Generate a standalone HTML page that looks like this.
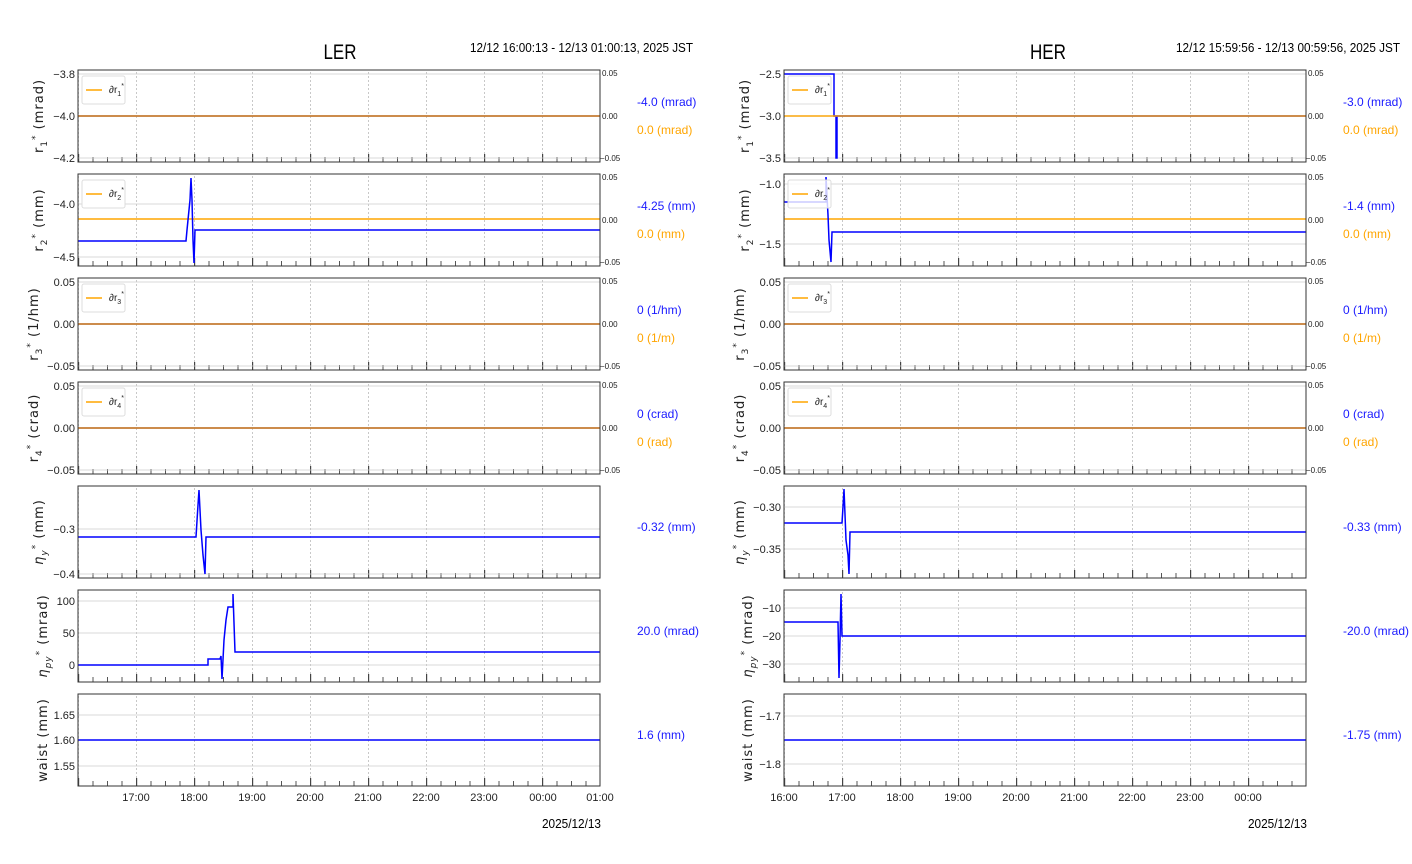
<!DOCTYPE html>
<html><head><meta charset="utf-8"><style>
body{margin:0;background:#fff}
svg{display:block;font-family:"Liberation Sans",sans-serif}
.t{font-size:11px;fill:#222}
.r{font-size:8px;fill:#222}
.yl{font-size:13px;fill:#222;font-family:"DejaVu Sans",sans-serif;letter-spacing:1px}
.b{font-size:12px;fill:#1a1aff}
.o{font-size:12px;fill:#ffa500}
.fr{fill:none;stroke:#333;stroke-width:1}
.g{stroke:#ccc;stroke-width:.8}
.bl{fill:none;stroke:#0000ff;stroke-width:1.5}
.or{stroke:#ffa500;stroke-width:1.5}
.orh{stroke:#ffa500;stroke-width:1.8;opacity:.8}
.lg{fill:#fff;stroke:#ddd;stroke-width:1}
</style></head><body>
<svg width="1412" height="864" viewBox="0 0 1412 864">
<defs>
<pattern id="gl" x="78" y="0" width="58" height="4" patternUnits="userSpaceOnUse"><rect x="58" y="0" width="0.8" height="2" fill="#bbb"/><rect x="0" y="0" width="0.8" height="2" fill="#bbb"/></pattern>
<pattern id="gr" x="784" y="0" width="58" height="4" patternUnits="userSpaceOnUse"><rect x="0" y="0" width="0.8" height="2" fill="#bbb"/></pattern>
<pattern id="tl" x="78" y="70" width="14.5" height="104" patternUnits="userSpaceOnUse"><rect x="0" y="87" width="1" height="5" fill="#555"/></pattern>
<pattern id="tr" x="784" y="70" width="14.5" height="104" patternUnits="userSpaceOnUse"><rect x="0" y="87" width="1" height="5" fill="#555"/></pattern>
<pattern id="ml" x="78" y="70" width="58" height="104" patternUnits="userSpaceOnUse"><rect x="0" y="84" width="1.2" height="8" fill="#444"/></pattern>
<pattern id="mr" x="784" y="70" width="58" height="104" patternUnits="userSpaceOnUse"><rect x="0" y="84" width="1.2" height="8" fill="#444"/></pattern>
</defs>

<text x="340" y="59" text-anchor="middle" style="font-size:21px" textLength="33" lengthAdjust="spacingAndGlyphs">LER</text>
<text x="470" y="52" style="font-size:13px" textLength="223" lengthAdjust="spacingAndGlyphs">12/12 16:00:13 - 12/13 01:00:13, 2025 JST</text>
<text x="1048" y="59" text-anchor="middle" style="font-size:21px" textLength="36" lengthAdjust="spacingAndGlyphs">HER</text>
<text x="1176" y="52" style="font-size:13px" textLength="224" lengthAdjust="spacingAndGlyphs">12/12 15:59:56 - 12/13 00:59:56, 2025 JST</text>

<g>
<rect x="78" y="70" width="522" height="92" fill="url(#gl)"/><rect x="78" y="174" width="522" height="92" fill="url(#gl)"/><rect x="78" y="278" width="522" height="92" fill="url(#gl)"/><rect x="78" y="382" width="522" height="92" fill="url(#gl)"/><rect x="78" y="486" width="522" height="92" fill="url(#gl)"/><rect x="78" y="590" width="522" height="92" fill="url(#gl)"/><rect x="78" y="694" width="522" height="92" fill="url(#gl)"/>
<rect x="784" y="70" width="522" height="92" fill="url(#gr)"/><rect x="784" y="174" width="522" height="92" fill="url(#gr)"/><rect x="784" y="278" width="522" height="92" fill="url(#gr)"/><rect x="784" y="382" width="522" height="92" fill="url(#gr)"/><rect x="784" y="486" width="522" height="92" fill="url(#gr)"/><rect x="784" y="590" width="522" height="92" fill="url(#gr)"/><rect x="784" y="694" width="522" height="92" fill="url(#gr)"/>
<rect x="78" y="70" width="522" height="728" fill="url(#tl)"/>
<rect x="784" y="70" width="522" height="728" fill="url(#tr)"/>
<rect x="78" y="70" width="522" height="728" fill="url(#ml)"/>
<rect x="784" y="70" width="522" height="728" fill="url(#mr)"/>
</g>

<g class="g">
<path d="M78 74H600M78 116H600M78 158H600M78 204H600M78 257H600M78 282H600M78 324H600M78 366H600M78 386H600M78 428H600M78 470H600M78 529H600M78 574H600M78 601H600M78 633H600M78 665H600M78 715H600M78 740H600M78 766H600"/>
<path d="M784 74H1306M784 116H1306M784 158H1306M784 184H1306M784 244H1306M784 282H1306M784 324H1306M784 366H1306M784 386H1306M784 428H1306M784 470H1306M784 507H1306M784 549H1306M784 608H1306M784 636H1306M784 664H1306M784 716H1306M784 764H1306"/>
</g>

<path class="bl" d="M78 116H600M78 324H600M78 428H600"/>
<path class="orh" d="M78 116H600M78 324H600M78 428H600"/>
<path class="or" d="M78 219H600"/>
<path class="bl" d="M78 241H186L187 230L188 220L190 200L191 178L192 200L193 240L194 263L195 230H600"/>
<path class="bl" d="M78 537H196L198 505L199 490L201 530L203 555L205 574L206 537H600"/>
<path class="bl" d="M78 665H208V659H220L221 656L222 679L224 640L226 620L228 607H233V594L235 652H600"/>
<path class="bl" d="M78 740H600"/>

<path class="bl" d="M784 74H834V116H836V158H837V116H1306M784 324H1306M784 428H1306"/>
<path class="orh" d="M784 116H1306M784 324H1306M784 428H1306"/>
<path class="or" d="M784 219H1306"/>
<path class="bl" d="M784 202H826L826 177L828 215L829 240L831 262L832 232H1306"/>
<path class="bl" d="M784 523H842L843 507L844 489L846 540L848 555L849 574L850 532H1306"/>
<path class="bl" d="M784 622H838L839 678L840 640L841 594L842 636H1306"/>
<path class="bl" d="M784 740H1306"/>

<g>
<rect class="lg" x="82" y="76" width="43" height="28" rx="2"/><path class="or" d="M86 90H102"/><text x="109" y="93" class="r" style="font-size:10px">∂r<tspan font-size="7" dy="3">1</tspan><tspan font-size="7" dy="-8">*</tspan></text>
<rect class="lg" x="82" y="180" width="43" height="28" rx="2"/><path class="or" d="M86 194H102"/><text x="109" y="197" class="r" style="font-size:10px">∂r<tspan font-size="7" dy="3">2</tspan><tspan font-size="7" dy="-8">*</tspan></text>
<rect class="lg" x="82" y="284" width="43" height="28" rx="2"/><path class="or" d="M86 298H102"/><text x="109" y="301" class="r" style="font-size:10px">∂r<tspan font-size="7" dy="3">3</tspan><tspan font-size="7" dy="-8">*</tspan></text>
<rect class="lg" x="82" y="388" width="43" height="28" rx="2"/><path class="or" d="M86 402H102"/><text x="109" y="405" class="r" style="font-size:10px">∂r<tspan font-size="7" dy="3">4</tspan><tspan font-size="7" dy="-8">*</tspan></text>
<rect class="lg" x="788" y="76" width="43" height="28" rx="2"/><path class="or" d="M792 90H808"/><text x="815" y="93" class="r" style="font-size:10px">∂r<tspan font-size="7" dy="3">1</tspan><tspan font-size="7" dy="-8">*</tspan></text>
<rect class="lg" x="788" y="180" width="43" height="28" rx="2" style="fill-opacity:.8"/><path class="or" d="M792 194H808"/><text x="815" y="197" class="r" style="font-size:10px">∂r<tspan font-size="7" dy="3">2</tspan><tspan font-size="7" dy="-8">*</tspan></text>
<rect class="lg" x="788" y="284" width="43" height="28" rx="2"/><path class="or" d="M792 298H808"/><text x="815" y="301" class="r" style="font-size:10px">∂r<tspan font-size="7" dy="3">3</tspan><tspan font-size="7" dy="-8">*</tspan></text>
<rect class="lg" x="788" y="388" width="43" height="28" rx="2"/><path class="or" d="M792 402H808"/><text x="815" y="405" class="r" style="font-size:10px">∂r<tspan font-size="7" dy="3">4</tspan><tspan font-size="7" dy="-8">*</tspan></text>
</g>

<g class="fr">
<rect x="78" y="70" width="522" height="92"/><rect x="78" y="174" width="522" height="92"/><rect x="78" y="278" width="522" height="92"/><rect x="78" y="382" width="522" height="92"/><rect x="78" y="486" width="522" height="92"/><rect x="78" y="590" width="522" height="92"/><rect x="78" y="694" width="522" height="92"/>
<rect x="784" y="70" width="522" height="92"/><rect x="784" y="174" width="522" height="92"/><rect x="784" y="278" width="522" height="92"/><rect x="784" y="382" width="522" height="92"/><rect x="784" y="486" width="522" height="92"/><rect x="784" y="590" width="522" height="92"/><rect x="784" y="694" width="522" height="92"/>
</g>

<g class="t" text-anchor="end">
<text x="75" y="78">−3.8</text><text x="75" y="120">−4.0</text><text x="75" y="162">−4.2</text>
<text x="75" y="208">−4.0</text><text x="75" y="261">−4.5</text>
<text x="75" y="286">0.05</text><text x="75" y="328">0.00</text><text x="75" y="370">−0.05</text>
<text x="75" y="390">0.05</text><text x="75" y="432">0.00</text><text x="75" y="474">−0.05</text>
<text x="75" y="533">−0.3</text><text x="75" y="578">−0.4</text>
<text x="75" y="605">100</text><text x="75" y="637">50</text><text x="75" y="669">0</text>
<text x="75" y="719">1.65</text><text x="75" y="744">1.60</text><text x="75" y="770">1.55</text>
<text x="781" y="78">−2.5</text><text x="781" y="120">−3.0</text><text x="781" y="162">−3.5</text>
<text x="781" y="188">−1.0</text><text x="781" y="248">−1.5</text>
<text x="781" y="286">0.05</text><text x="781" y="328">0.00</text><text x="781" y="370">−0.05</text>
<text x="781" y="390">0.05</text><text x="781" y="432">0.00</text><text x="781" y="474">−0.05</text>
<text x="781" y="511">−0.30</text><text x="781" y="553">−0.35</text>
<text x="781" y="612">−10</text><text x="781" y="640">−20</text><text x="781" y="668">−30</text>
<text x="781" y="720">−1.7</text><text x="781" y="768">−1.8</text>
</g>
<g class="r">
<text x="602" y="76">0.05</text><text x="602" y="119">0.00</text><text x="600" y="161">−0.05</text>
<text x="602" y="180">0.05</text><text x="602" y="223">0.00</text><text x="600" y="265">−0.05</text>
<text x="602" y="284">0.05</text><text x="602" y="327">0.00</text><text x="600" y="369">−0.05</text>
<text x="602" y="388">0.05</text><text x="602" y="431">0.00</text><text x="600" y="473">−0.05</text>
<text x="1308" y="76">0.05</text><text x="1308" y="119">0.00</text><text x="1306" y="161">−0.05</text>
<text x="1308" y="180">0.05</text><text x="1308" y="223">0.00</text><text x="1306" y="265">−0.05</text>
<text x="1308" y="284">0.05</text><text x="1308" y="327">0.00</text><text x="1306" y="369">−0.05</text>
<text x="1308" y="388">0.05</text><text x="1308" y="431">0.00</text><text x="1306" y="473">−0.05</text>
</g>

<g class="yl" text-anchor="middle">
<text transform="translate(43,116) rotate(-90)">r<tspan font-size="9" dy="4">1</tspan><tspan font-size="9" dy="-9">*</tspan><tspan dy="5"> (mrad)</tspan></text>
<text transform="translate(43,220) rotate(-90)">r<tspan font-size="9" dy="4">2</tspan><tspan font-size="9" dy="-9">*</tspan><tspan dy="5"> (mm)</tspan></text>
<text transform="translate(38,324) rotate(-90)">r<tspan font-size="9" dy="4">3</tspan><tspan font-size="9" dy="-9">*</tspan><tspan dy="5"> (1/hm)</tspan></text>
<text transform="translate(38,428) rotate(-90)">r<tspan font-size="9" dy="4">4</tspan><tspan font-size="9" dy="-9">*</tspan><tspan dy="5"> (crad)</tspan></text>
<text transform="translate(43,532) rotate(-90)"><tspan font-style="italic">η</tspan><tspan font-size="9" dy="4" font-style="italic">y</tspan><tspan font-size="9" dy="-9">*</tspan><tspan dy="5"> (mm)</tspan></text>
<text transform="translate(47,636) rotate(-90)"><tspan font-style="italic">η</tspan><tspan font-size="9" dy="4" font-style="italic">py</tspan><tspan font-size="9" dy="-9">*</tspan><tspan dy="5"> (mrad)</tspan></text>
<text transform="translate(47,740) rotate(-90)">waist (mm)</text>
<text transform="translate(749,116) rotate(-90)">r<tspan font-size="9" dy="4">1</tspan><tspan font-size="9" dy="-9">*</tspan><tspan dy="5"> (mrad)</tspan></text>
<text transform="translate(749,220) rotate(-90)">r<tspan font-size="9" dy="4">2</tspan><tspan font-size="9" dy="-9">*</tspan><tspan dy="5"> (mm)</tspan></text>
<text transform="translate(744,324) rotate(-90)">r<tspan font-size="9" dy="4">3</tspan><tspan font-size="9" dy="-9">*</tspan><tspan dy="5"> (1/hm)</tspan></text>
<text transform="translate(744,428) rotate(-90)">r<tspan font-size="9" dy="4">4</tspan><tspan font-size="9" dy="-9">*</tspan><tspan dy="5"> (crad)</tspan></text>
<text transform="translate(744,532) rotate(-90)"><tspan font-style="italic">η</tspan><tspan font-size="9" dy="4" font-style="italic">y</tspan><tspan font-size="9" dy="-9">*</tspan><tspan dy="5"> (mm)</tspan></text>
<text transform="translate(752,636) rotate(-90)"><tspan font-style="italic">η</tspan><tspan font-size="9" dy="4" font-style="italic">py</tspan><tspan font-size="9" dy="-9">*</tspan><tspan dy="5"> (mrad)</tspan></text>
<text transform="translate(752,740) rotate(-90)">waist (mm)</text>
</g>

<g>
<text class="b" x="637" y="106">-4.0 (mrad)</text><text class="o" x="637" y="134">0.0 (mrad)</text>
<text class="b" x="637" y="210">-4.25 (mm)</text><text class="o" x="637" y="238">0.0 (mm)</text>
<text class="b" x="637" y="314">0 (1/hm)</text><text class="o" x="637" y="342">0 (1/m)</text>
<text class="b" x="637" y="418">0 (crad)</text><text class="o" x="637" y="446">0 (rad)</text>
<text class="b" x="637" y="531">-0.32 (mm)</text>
<text class="b" x="637" y="635">20.0 (mrad)</text>
<text class="b" x="637" y="739">1.6 (mm)</text>
<text class="b" x="1343" y="106">-3.0 (mrad)</text><text class="o" x="1343" y="134">0.0 (mrad)</text>
<text class="b" x="1343" y="210">-1.4 (mm)</text><text class="o" x="1343" y="238">0.0 (mm)</text>
<text class="b" x="1343" y="314">0 (1/hm)</text><text class="o" x="1343" y="342">0 (1/m)</text>
<text class="b" x="1343" y="418">0 (crad)</text><text class="o" x="1343" y="446">0 (rad)</text>
<text class="b" x="1343" y="531">-0.33 (mm)</text>
<text class="b" x="1343" y="635">-20.0 (mrad)</text>
<text class="b" x="1343" y="739">-1.75 (mm)</text>
</g>

<g class="t" text-anchor="middle">
<text x="136" y="801">17:00</text><text x="194" y="801">18:00</text><text x="252" y="801">19:00</text><text x="310" y="801">20:00</text><text x="368" y="801">21:00</text><text x="426" y="801">22:00</text><text x="484" y="801">23:00</text><text x="543" y="801">00:00</text><text x="600" y="801">01:00</text>
<text x="784" y="801">16:00</text><text x="842" y="801">17:00</text><text x="900" y="801">18:00</text><text x="958" y="801">19:00</text><text x="1016" y="801">20:00</text><text x="1074" y="801">21:00</text><text x="1132" y="801">22:00</text><text x="1190" y="801">23:00</text><text x="1248" y="801">00:00</text>
</g>
<text x="601" y="828" text-anchor="end" style="font-size:13px" textLength="59" lengthAdjust="spacingAndGlyphs">2025/12/13</text>
<text x="1307" y="828" text-anchor="end" style="font-size:13px" textLength="59" lengthAdjust="spacingAndGlyphs">2025/12/13</text>
</svg>
</body></html>
